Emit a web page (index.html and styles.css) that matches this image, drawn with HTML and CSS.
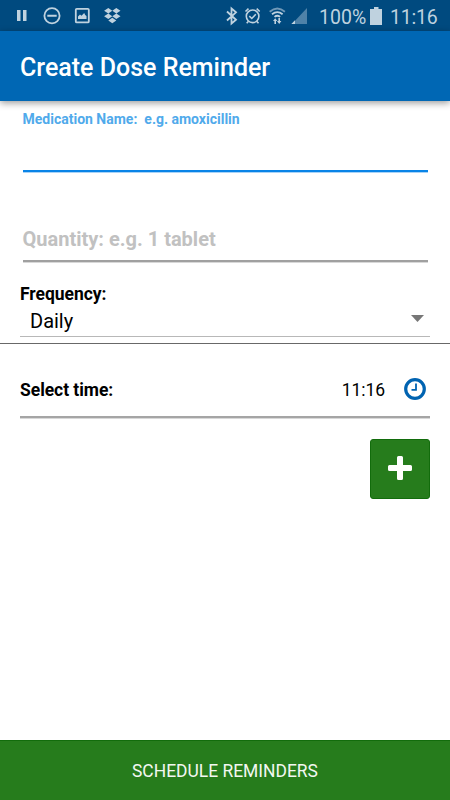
FILE: index.html
```html
<!DOCTYPE html>
<html lang="en">
<head>
<meta charset="utf-8">
<title>Create Dose Reminder</title>
<link rel="stylesheet" href="styles.css">
</head>
<body>
<div class="status">
  <svg class="left-icons" width="122" height="31" viewBox="0 0 122 31">
    <path d="M17 10h3.500v11H17zM23 10h3.500v11H23z"/>
    <circle class="line" cx="52" cy="15.700" r="7.600"/>
    <path d="M47.300 14.700h9.400v2h-9.400z"/>
    <rect class="line" x="75.800" y="8.800" width="13" height="13.600" rx="1"/>
    <path d="M78 19v-2.500l2-2 1.500 1.200 2.700-2.700 1 2 1.300 1V19z"/>
    <path d="M108.300 8l4 2.700-4 2.800-4.200-2.800zM116.300 8l4.200 2.700-4.200 2.800-4-2.800zM108.300 13.600l4 2.700-4 2.600-4.200-2.600zM116.300 13.600l4.200 2.700-4.200 2.600-4-2.600zM112.300 17.800l4 2.800-4 2.700-4-2.700z"/>
  </svg>
  <svg class="right-icons" width="90" height="31" viewBox="222 0 90 31">
    <path class="line" d="M227 11.500l9 8.300-4.500 3.700v-15l4.500 3.800-9 8.200"/>
    <circle class="line medium" cx="252.600" cy="16.300" r="6.300"/>
    <path class="line medium" d="M245.500 11.500l3-2.800M259.700 11.500l-3-2.800M248.500 21.200l-1.800 2M256.700 21.200l1.800 2M249.300 16.200l2.500 2.300 4-4.200"/>
    <path class="line faint" d="M269.700 11.700q7.600-6.500 15.200 0"/>
    <path class="line" d="M272 14.200q5.300-4.200 10.600 0M274.500 16.900q2.800-2.400 5.600 0"/>
    <path d="M273 21l2.200-2.800 2.200 2.800H276v3h-1.600v-3zM277 21h1.400v-3h1.600v3h1.400l-2.200 3z"/>
    <path class="signal" d="M307 8v16h-15z"/>
    <path d="M295 20.300V24h-3.700z"/>
  </svg>
  <span class="percent">100%</span>
  <svg class="battery" width="12" height="18" viewBox="0 0 12 18"><path d="M4 0h4.500v2H12v16H0V2h4z"/></svg>
  <span class="clock">11:16</span>
</div>
<header class="header"><h1>Create Dose Reminder</h1></header>
<main class="main">
  <div class="field medication"><span>Medication Name:&nbsp; e.g. amoxicillin</span></div>
  <div class="field quantity"><span>Quantity: e.g. 1 tablet</span></div>
  <section class="frequency">
    <div class="label frequency-label"><span>Frequency:</span></div>
    <div class="select"><span>Daily</span>
      <svg width="13" height="7" viewBox="0 0 13 7"><path d="M0 0h13L6.500 7z"/></svg>
    </div>
  </section>
  <section class="time">
    <span class="label time-label">Select time:</span>
    <span class="time-value">11:16</span>
    <svg width="22" height="22" viewBox="0 0 22 22"><circle cx="11" cy="11" r="9.300"/><path d="M12 5.500v6.400H7.500"/></svg>
  </section>
  <button class="add" aria-label="Add">
    <svg width="24" height="24" viewBox="0 0 24 24"><path d="M10.500 0h3q1.500 0 1.500 1.500V9h7.500q1.500 0 1.500 1.500v3q0 1.500-1.500 1.500H15v7.500q0 1.500-1.500 1.500h-3Q9 24 9 22.500V15H1.500Q0 15 0 13.500v-3Q0 9 1.500 9H9V1.500Q9 0 10.500 0z"/></svg>
  </button>
</main>
<button class="schedule"><span>SCHEDULE REMINDERS</span></button>
</body>
</html>
```

FILE: styles.css
```css
* { box-sizing: border-box; }
body {
  margin: 0;
  height: 800px;
  display: flex;
  flex-direction: column;
  overflow: hidden;
  background: #fff;
  color: #000;
  font-family: Roboto, "Liberation Sans", sans-serif;
}
svg { display: block; flex: none; }
span { white-space: nowrap; }
.status {
  height: 31px;
  flex: none;
  display: flex;
  align-items: center;
  background: #004a7f;
  color: #bfd2df;
  fill: #bfd2df;
  font-size: 19.500px;
}
.line { fill: none; stroke: #bfd2df; stroke-width: 1.8; }
.medium { stroke-width: 1.600; }
.faint { stroke: #7099b8; }
.signal { fill: #4f82a8; }
.right-icons { margin-left: 100px; }
.percent { width: 51px; margin-left: 7px; padding-top: 3px; }
.clock { margin-left: 8px; padding-top: 3px; letter-spacing: -.2px; }
.header {
  height: 70px;
  flex: none;
  display: flex;
  align-items: center;
  padding: 3px 20px 0;
  background: #0067b4;
  color: #fff;
  box-shadow: 0 2px 7px rgba(0, 0, 0, .4);
}
h1 { margin: 0; font-size: 25px; font-weight: 500; }
.main { flex: 1; display: flex; flex-direction: column; }
.field { margin: 0 22.500px; font-weight: 700; }
.medication {
  height: 71px;
  padding-top: 9px;
  border-bottom: 2px solid #0984e7;
  box-shadow: 0 1px #a9d3f7;
  color: #50aaeb;
  font-size: 14px;
  line-height: 18px;
}
.quantity {
  height: 90px;
  padding-top: 55px;
  border-bottom: 2px solid #a0a0a0;
  box-shadow: 0 1px #d8d8d8;
  color: #c1c1c1;
  font-size: 20px;
  line-height: 24px;
}
.frequency { height: 82px; padding: 20px 20px 0; border-bottom: 1px solid #686868; }
.label { font-size: 17.500px; font-weight: 700; letter-spacing: -.05px; }
.frequency-label { height: 24px; line-height: 24px; }
.select {
  height: 31px;
  display: flex;
  justify-content: space-between;
  padding: 3px 6px 0 10px;
  border-bottom: 1px solid #b8b8b8;
  font-size: 20px;
  line-height: 24px;
}
.select svg { margin-top: 6px; fill: #777; }
.time {
  height: 74px;
  display: flex;
  align-items: center;
  margin: 0 20px;
  padding: 17px 4px 0 0;
  border-bottom: 2px solid #a5a5a5;
  box-shadow: 0 1px #d8d8d8;
}
.time-label, .time-value { padding-top: 2px; }
.time-value { margin-left: auto; font-size: 17.500px; letter-spacing: -.05px; }
.time svg { margin-left: 19px; fill: none; stroke: #0063b1; stroke-width: 3.200; }
.time path { stroke-width: 1.800; }
.add {
  width: 60px;
  height: 60px;
  margin: 21px 20px 0 auto;
  padding: 0 0 2px;
  display: flex;
  align-items: center;
  justify-content: center;
  border: 1px solid #126c0c;
  border-radius: 3px;
  background: #267c1c;
  fill: #fff;
}
.schedule {
  height: 60px;
  flex: none;
  padding: 0;
  border: 0;
  border-top: 1px solid #126c0c;
  background: #267c1c;
  color: #f2f7f1;
  font: 17.450px Roboto, "Liberation Sans", sans-serif;
}
```
